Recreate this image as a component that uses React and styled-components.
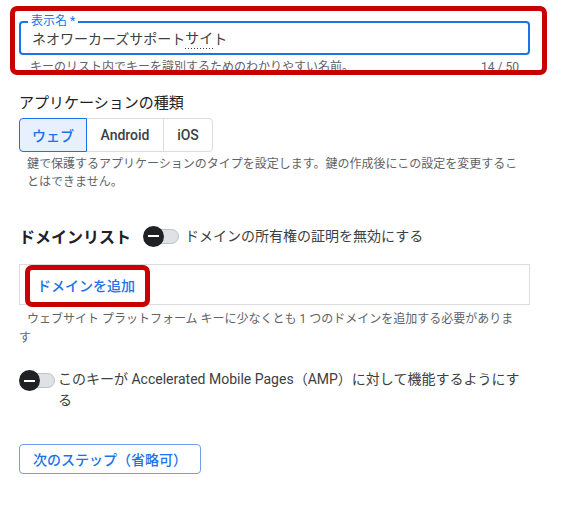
import React, { useState } from 'react';
import styled, { createGlobalStyle } from 'styled-components';

const GlobalStyle = createGlobalStyle`
    body {
        margin: 0;
        background: #ffffff;
        font-family: Roboto, "Noto Sans CJK JP", sans-serif;
        color: #3c4043;
    }
`;

const Page = styled.div`
    width: 566px;
    box-sizing: border-box;
    padding: 21px 36px 0 19px;
`;

// 赤い注釈枠
const Highlight = styled.div`
    position: absolute;
    inset: ${(p) => p.$inset};
    box-sizing: border-box;
    border: 5px solid #c80000;
    border-radius: 7px;
    pointer-events: none;
    z-index: 2;
`;

const FieldWrap = styled.div`
    position: relative;
    height: 54px;
`;

const Outlined = styled.div`
    position: relative;
    height: 34px;
    box-sizing: border-box;
    border: 2px solid #1a73e8;
    border-radius: 4px;
    padding: 0 11px;
    display: flex;
    align-items: center;
    font-size: 14px;
    color: #3c4043;
`;

const FloatLabel = styled.span`
    position: absolute;
    top: -9px;
    left: 7px;
    padding: 0 3px;
    background: #ffffff;
    font-size: 12px;
    line-height: 14px;
    color: #1a73e8;
`;

const Misspelled = styled.span`
    background-image: linear-gradient(to right, #3c4043 50%, transparent 50%);
    background-size: 3px 1px;
    background-repeat: repeat-x;
    background-position: 0 100%;
    padding-bottom: 2px;
`;

const HintRow = styled.div`
    display: flex;
    justify-content: space-between;
    padding: 0 11px;
    margin-top: 4px;
    font-size: 12px;
    line-height: 16px;
    color: #5f6368;
`;

const SectionTitle = styled.div`
    margin-top: 18px;
    font-size: 15px;
    line-height: 20px;
    color: #202124;
`;

const Segmented = styled.div`
    display: flex;
    margin-top: 5px;
    height: 34px;
`;

const Segment = styled.button`
    position: relative;
    width: ${(p) => p.$w}px;
    box-sizing: border-box;
    font-family: Roboto, "Noto Sans CJK JP", sans-serif;
    font-size: 14px;
    font-weight: 500;
    padding: 0;
    margin-left: -1px;
    border: 1px solid ${(p) => (p.$active ? '#1a73e8' : '#dadce0')};
    z-index: ${(p) => (p.$active ? 1 : 0)};
    background: ${(p) => (p.$active ? '#e8f0fe' : '#ffffff')};
    color: ${(p) => (p.$active ? '#1a73e8' : '#3c4043')};
    cursor: pointer;

    &:first-child {
        margin-left: 0;
        border-radius: 4px 0 0 4px;
    }
    &:last-child {
        border-radius: 0 4px 4px 0;
    }
`;

const Help = styled.p`
    margin: ${(p) => p.$mt || '0'} 0 0;
    padding: 0 9px 0 ${(p) => (p.$indent ? '0' : '8px')};
    text-indent: ${(p) => (p.$indent ? '8px' : '0')};
    font-size: 12px;
    line-height: ${(p) => p.$lh || '18px'};
    color: #5f6368;
`;

const ListHeader = styled.div`
    display: flex;
    align-items: center;
    margin-top: 34px;
    height: 22px;
`;

const ListTitle = styled.h3`
    margin: 0 12px 0 0;
    font-size: 16px;
    font-weight: 700;
    color: #202124;
`;

const ToggleRow = styled.label`
    display: flex;
    align-items: ${(p) => (p.$top ? 'flex-start' : 'center')};
    gap: ${(p) => p.$gap};
    font-size: 14px;
    line-height: 21px;
    color: #3c4043;
    cursor: pointer;
    margin-top: ${(p) => p.$mt || '0'};
    padding-right: 9px;
`;

const Toggle = styled.span`
    position: relative;
    flex: none;
    width: 36px;
    height: 21px;
    margin-top: ${(p) => (p.$top ? '1px' : '0')};
    display: flex;
    align-items: center;
    justify-content: flex-end;
`;

const Track = styled.span`
    width: 30px;
    height: 15px;
    box-sizing: border-box;
    border-radius: 8px;
    background: #dfe1e5;
    border: 1px solid #bdc1c6;
`;

const Knob = styled.span`
    position: absolute;
    left: 0;
    top: 0;
    width: 21px;
    height: 21px;
    border-radius: 50%;
    background: #202124;

    &::after {
        content: '';
        position: absolute;
        left: 5px;
        top: 9.5px;
        width: 11px;
        height: 2px;
        background: #ffffff;
    }
`;

const DomainBox = styled.div`
    position: relative;
    margin-top: 17px;
    height: 41px;
    box-sizing: border-box;
    border: 1px solid #dadce0;
    display: flex;
    align-items: center;
    padding-left: 17px;
`;

const TextButton = styled.button`
    border: none;
    background: none;
    padding: 0;
    font-family: Roboto, "Noto Sans CJK JP", sans-serif;
    font-size: 14px;
    font-weight: 500;
    color: #1a73e8;
    cursor: pointer;
`;

const OutlineButton = styled.button`
    margin-top: 33px;
    height: 30px;
    padding: 0 13px;
    border: 1px solid #6f9fe9;
    border-radius: 4px;
    background: #ffffff;
    font-family: Roboto, "Noto Sans CJK JP", sans-serif;
    font-size: 14px;
    font-weight: 500;
    color: #1a73e8;
    cursor: pointer;
`;

const Switch = ({ top }) => (
    <Toggle $top={top}>
        <Track />
        <Knob />
    </Toggle>
);

const types = [
    { id: 'web', label: 'ウェブ', w: 68 },
    { id: 'android', label: 'Android', w: 78 },
    { id: 'ios', label: 'iOS', w: 50 },
];

const App = () => {
    const [type, setType] = useState('web');

    return (
        <Page>
            <GlobalStyle />
            <FieldWrap>
                <Outlined>
                    <FloatLabel>表示名 *</FloatLabel>
                    ネオワーカーズサポート<Misspelled>サイ</Misspelled>ト
                </Outlined>
                <HintRow>
                    <span>キーのリスト内でキーを識別するためのわかりやすい名前。</span>
                    <span>14 / 50</span>
                </HintRow>
                <Highlight $inset="-15px -17px 0 -9px" />
            </FieldWrap>

            <SectionTitle>アプリケーションの種類</SectionTitle>
            <Segmented>
                {types.map((t) => (
                    <Segment key={t.id} $w={t.w} $active={type === t.id} onClick={() => setType(t.id)}>
                        {t.label}
                    </Segment>
                ))}
            </Segmented>
            <Help $mt="3px">
                鍵で保護するアプリケーションのタイプを設定します。鍵の作成後にこの設定を変更することはできません。
            </Help>

            <ListHeader>
                <ListTitle>ドメインリスト</ListTitle>
                <ToggleRow $gap="6px">
                    <Switch />
                    ドメインの所有権の証明を無効にする
                </ToggleRow>
            </ListHeader>

            <DomainBox>
                <TextButton>ドメインを追加</TextButton>
                <Highlight $inset="0 auto -3px 5px" style={{ width: 125 }} />
            </DomainBox>
            <Help $mt="5px" $lh="19px" $indent>
                ウェブサイト プラットフォーム キーに少なくとも 1 つのドメインを追加する必要があります
            </Help>

            <ToggleRow $gap="3px" $top $mt="21px">
                <Switch top />
                このキーが Accelerated Mobile Pages（AMP）に対して機能するようにする
            </ToggleRow>

            <OutlineButton>次のステップ（省略可）</OutlineButton>
        </Page>
    );
};

export default App;
